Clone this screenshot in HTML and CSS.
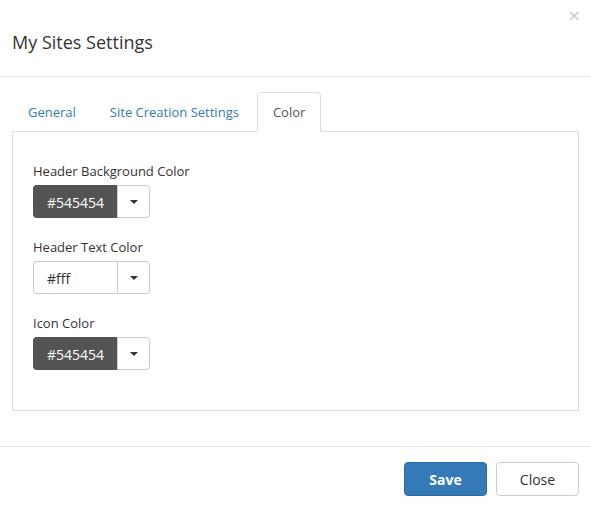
FILE: index.html
```html
<!DOCTYPE html>
<html>
<head>
<meta charset="utf-8">
<link rel="stylesheet" href="styles.css">
</head>
<body>
<div class="modal">
  <div class="modal-header">
    <h4 class="modal-title">My Sites Settings</h4>
    <button class="close" type="button">×</button>
  </div>
  <div class="modal-body">
    <ul class="nav-tabs">
      <li class="tab"><a>General</a></li>
      <li class="tab"><a>Site Creation Settings</a></li>
      <li class="tab active"><a>Color</a></li>
    </ul>
    <div class="tab-content">
      <div class="form-group">
        <label class="label">Header Background Color</label>
        <div class="input-group">
          <div class="color-input dark">#545454</div>
          <button class="addon" type="button"><span class="caret"></span></button>
        </div>
      </div>
      <div class="form-group">
        <label class="label">Header Text Color</label>
        <div class="input-group">
          <div class="color-input light">#fff</div>
          <button class="addon" type="button"><span class="caret"></span></button>
        </div>
      </div>
      <div class="form-group">
        <label class="label">Icon Color</label>
        <div class="input-group">
          <div class="color-input dark">#545454</div>
          <button class="addon" type="button"><span class="caret"></span></button>
        </div>
      </div>
    </div>
  </div>
  <div class="modal-footer">
    <button class="btn btn-primary" type="button">Save</button>
    <button class="btn btn-default" type="button">Close</button>
  </div>
</div>
</body>
</html>
```

FILE: styles.css
```css
html, body {
  margin: 0;
  padding: 0;
  background: #fff;
}
body {
  font-family: "Open Sans", "Liberation Sans", sans-serif;
  font-size: 13px;
  color: #333;
}
.modal {
  width: 591px;
}
.modal-header {
  position: relative;
  height: 77px;
  box-sizing: border-box;
  padding: 0 12px;
  display: flex;
  align-items: center;
  border-bottom: 1px solid #e5e5e5;
}
.modal-title {
  margin: 7px 0 0 0;
  font-size: 18px;
  font-weight: 400;
  color: #333;
}
.close {
  position: absolute;
  right: 11px;
  top: 5px;
  border: 0;
  background: none;
  padding: 0;
  font-family: "Open Sans", sans-serif;
  font-size: 20px;
  line-height: 22px;
  color: #c8c8c8;
}
.modal-body {
  padding: 15px 12px 35px 12px;
}
.nav-tabs {
  list-style: none;
  margin: 0;
  padding: 0;
  display: flex;
  border-bottom: 1px solid #ddd;
}
.tab {
  margin-right: 2px;
  margin-bottom: -1px;
}
.tab a {
  display: block;
  padding: 10px 15px;
  line-height: 18px;
  border: 1px solid transparent;
  border-radius: 4px 4px 0 0;
  color: #337ab7;
}
.tab.active a {
  color: #555;
  background: #fff;
  border-color: #ddd #ddd transparent #ddd;
}
.tab-content {
  border: 1px solid #ddd;
  border-top: 0;
  padding: 30px 20px 20px 20px;
}
.form-group {
  margin-bottom: 20px;
}
.label {
  display: block;
  margin-bottom: 5px;
  line-height: 18px;
  color: #333;
}
.input-group {
  display: flex;
  width: 117px;
  height: 33px;
}
.color-input {
  box-sizing: border-box;
  width: 84px;
  height: 33px;
  padding: 0 13px;
  line-height: 33px;
  font-size: 14px;
  border: 1px solid #ccc;
  border-right: 0;
  border-radius: 4px 0 0 4px;
}
.color-input.dark {
  background: #545454;
  border-color: #545454;
  color: #fff;
}
.color-input.light {
  background: #fff;
  color: #333;
}
.addon {
  box-sizing: border-box;
  width: 33px;
  height: 33px;
  border: 1px solid #ccc;
  border-radius: 0 4px 4px 0;
  background: #fff;
  padding: 0;
  display: flex;
  align-items: center;
  justify-content: center;
}
.caret {
  width: 0;
  height: 0;
  border-left: 4px solid transparent;
  border-right: 4px solid transparent;
  border-top: 4px solid #333;
}
.modal-footer {
  border-top: 1px solid #e5e5e5;
  padding: 15px 12px 10px 12px;
  display: flex;
  justify-content: flex-end;
  gap: 9px;
}
.btn {
  box-sizing: border-box;
  width: 83px;
  height: 34px;
  border-radius: 4px;
  font-family: "Open Sans", sans-serif;
  font-size: 14px;
  border: 1px solid #ccc;
  padding: 0;
}
.btn-primary {
  background: #337ab7;
  border-color: #2e6da4;
  color: #fff;
  font-weight: 700;
}
.btn-default {
  background: #fff;
  color: #333;
}
```
